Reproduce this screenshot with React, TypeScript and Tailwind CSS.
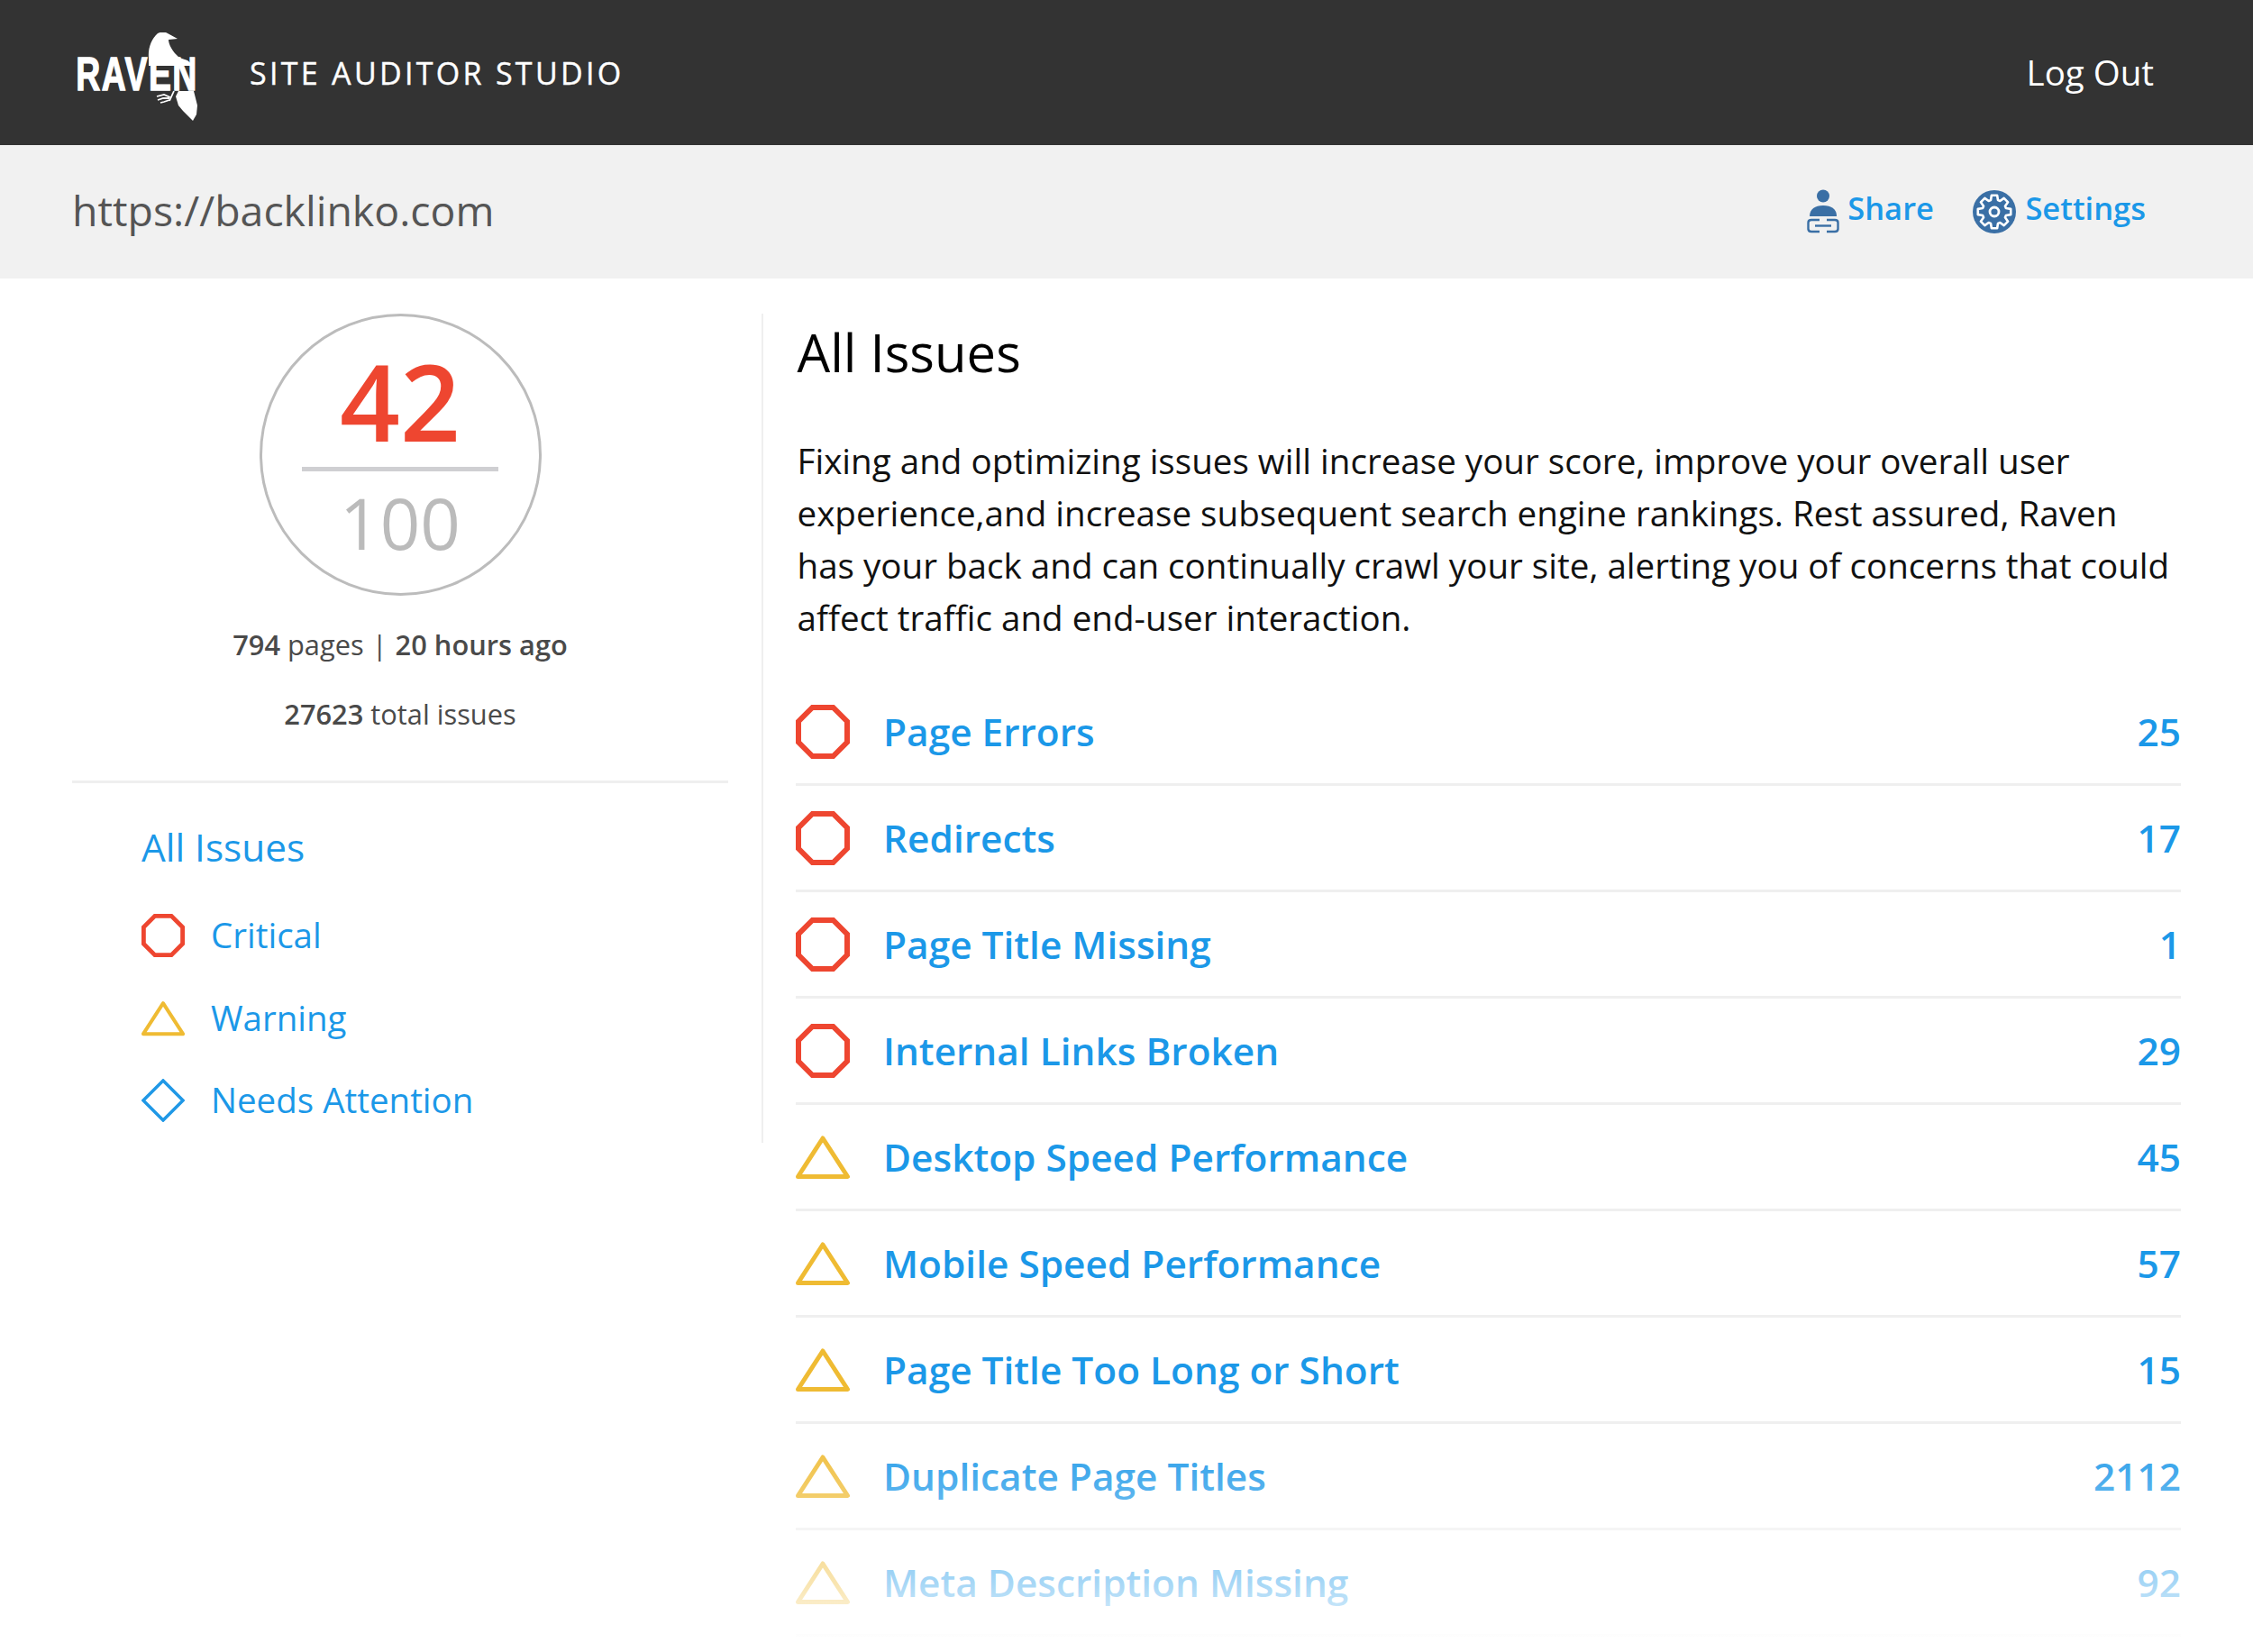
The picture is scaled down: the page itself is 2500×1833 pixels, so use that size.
import React from "react";

const FONT = "font-['Open_Sans',sans-serif]";

function Octagon({ className }: { className: string }) {
  return (
    <svg viewBox="0 0 60 60" className={className} fill="none" stroke="#ee4630" strokeWidth="6">
      <polygon points="18.5,3 41.5,3 57,18.5 57,41.5 41.5,57 18.5,57 3,41.5 3,18.5" />
    </svg>
  );
}

function Triangle({ className }: { className: string }) {
  return (
    <svg viewBox="0 0 60 48" className={className} fill="none" stroke="#efbb33" strokeWidth="5" strokeLinejoin="round">
      <polygon points="30,3 57.5,45.5 2.5,45.5" />
    </svg>
  );
}

function Diamond({ className }: { className: string }) {
  return (
    <svg viewBox="0 0 48 48" className={className} fill="none" stroke="#1f98e6" strokeWidth="3.5">
      <polygon points="24,2 46,24 24,46 2,24" />
    </svg>
  );
}

function Logo() {
  return (
    <div className="relative w-[140px] h-[100px] mt-[11px]">
      <svg viewBox="0 0 140 100" className="absolute inset-0 w-full h-full" fill="#fff">
        {/* head and shoulders */}
        <path d="M80 28 C79 18 83 7 90 1 C94 -1 98 -1 101 1 L112 7 L102 8 C102 13 106 21 114 28 L123 31 L130 37 L80 37 Z" />
        {/* tail */}
        <path d="M113 65 L130 65 L134 81 L133 91 L129 98 L118 87 L113 81 L110 71 Z" />
        {/* foot */}
        <g fill="none" stroke="#fff" strokeWidth="1.8">
          <path d="M108 65 L103 76" />
          <path d="M104 72 L97 69 L89 71" />
          <path d="M103 73 L96 73 L90 75" />
          <path d="M103 75 L97 77 L93 78" />
        </g>
      </svg>
      <div className="absolute left-[1px] top-[28px] w-[133px] flex justify-center">
        <span className="whitespace-nowrap font-['Liberation_Sans',sans-serif] font-bold text-white text-[52px] leading-[37px] tracking-[2px] scale-x-[0.72] [-webkit-text-stroke:1.4px_#fff]">
          RAVEN
        </span>
      </div>
    </div>
  );
}

function ShareIcon() {
  return (
    <svg viewBox="0 0 36 50" className="w-[36px] h-[50px]" fill="#3a6fa5">
      <circle cx="18" cy="7.5" r="7" />
      <path d="M3 30 C3 22 9 18 18 18 C27 18 33 22 33 30 Z" />
      <g fill="none" stroke="#3a6fa5" strokeWidth="2.4">
        <path d="M14 34 H5 C2.5 34 1.5 35 1.5 37 V44 C1.5 46 2.5 47 5 47 H14" />
        <path d="M22 34 H31 C33.5 34 34.5 35 34.5 37 V44 C34.5 46 33.5 47 31 47 H22" />
        <path d="M9 40.5 H27" />
      </g>
    </svg>
  );
}

// 8 toothed gear outline around (24,24)
function gearPath() {
  const pts: string[] = [];
  for (let i = 0; i < 8; i++) {
    const a = (i * Math.PI) / 4;
    const offs: [number, number][] = [
      [-0.3, 13.5],
      [-0.17, 18.5],
      [0.17, 18.5],
      [0.3, 13.5],
    ];
    for (const [d, r] of offs) {
      pts.push(`${(24 + r * Math.sin(a + d)).toFixed(2)},${(24 - r * Math.cos(a + d)).toFixed(2)}`);
    }
  }
  return pts.join(" ");
}

function SettingsIcon() {
  return (
    <svg viewBox="0 0 48 48" className="w-[48px] h-[48px]">
      <circle cx="24" cy="24" r="24" fill="#3a6fa5" />
      <polygon points={gearPath()} fill="none" stroke="#fff" strokeWidth="2.6" strokeLinejoin="round" />
      <circle cx="24" cy="24" r="5" fill="none" stroke="#fff" strokeWidth="2.8" />
    </svg>
  );
}

const issues = [
  { name: "Page Errors", count: "25", type: "critical" },
  { name: "Redirects", count: "17", type: "critical" },
  { name: "Page Title Missing", count: "1", type: "critical" },
  { name: "Internal Links Broken", count: "29", type: "critical" },
  { name: "Desktop Speed Performance", count: "45", type: "warning" },
  { name: "Mobile Speed Performance", count: "57", type: "warning" },
  { name: "Page Title Too Long or Short", count: "15", type: "warning" },
  { name: "Duplicate Page Titles", count: "2112", type: "warning" },
  { name: "Meta Description Missing", count: "92", type: "warning" },
];

export default function App() {
  return (
    <div className={`${FONT} relative w-[2500px] h-[1833px] overflow-hidden bg-white`}>
      <header className="h-[161px] bg-[#333333] flex items-center justify-between pl-[85px] pr-[110px]">
        <div className="flex items-center gap-[52px]">
          <Logo />
          <span className="text-white text-[34px] tracking-[3.3px] mt-[2px] [-webkit-text-stroke:0.4px_#fff]">SITE AUDITOR STUDIO</span>
        </div>
        <span className="text-white text-[38.5px]">Log Out</span>
      </header>

      <div className="h-[148px] bg-[#f1f1f1] flex items-center justify-between pl-[80px] pr-[119px]">
        <span className="text-[#555555] text-[46.4px] mb-[2px]">https://backlinko.com</span>
        <div className="flex items-center gap-[43.5px] text-[#1b98e8] text-[34.5px] font-semibold">
          <div className="flex items-center gap-[9px]">
            <ShareIcon />
            <span className="mb-[9px]">Share</span>
          </div>
          <div className="flex items-center gap-[10px]">
            <SettingsIcon />
            <span className="mb-[9px]">Settings</span>
          </div>
        </div>
      </div>

      <div className="flex pt-[39px]">
        <aside className="w-[767px] ml-[80px] shrink-0 h-[920px] border-r-2 border-[#efefef]">
          <div className="w-[728px] flex flex-col items-center">
            <div className="w-[313px] h-[313px] rounded-full border-[3px] border-[#bcbcbc] flex flex-col items-center">
              <div className="text-[#ee4630] text-[117px] leading-[116px] mt-[36px] font-semibold">42</div>
              <div className="w-[218px] h-[5px] bg-[#cfcfd2] mt-[15px]" />
              <div className="text-[#bbbbbb] text-[78px] leading-[80px] mt-[17px]">100</div>
            </div>
            <p className="mt-[32.5px] text-[#4a4a4a] text-[30.8px] leading-[42px]">
              <span className="font-semibold">794</span> pages <span className="mx-[1px]">|</span> <span className="font-semibold">20 hours ago</span>
            </p>
            <p className="mt-[35px] text-[#4a4a4a] text-[30.8px] leading-[42px]">
              <span className="font-semibold">27623</span> total issues
            </p>
          </div>
          <div className="w-[728px] h-[3px] bg-[#efefef] mt-[53.5px]" />
          <div className="pl-[77px] text-[#1b98e8]">
            <div className="text-[42.3px] leading-[60px] mt-[41px]">All Issues</div>
            <div className="flex items-center gap-[29px] text-[38.5px] h-[60px] mt-[38px]">
              <Octagon className="w-[48px] h-[48px]" />
              <span>Critical</span>
            </div>
            <div className="flex items-center gap-[29px] text-[38.5px] h-[60px] mt-[32px]">
              <Triangle className="w-[48px] h-[40px]" />
              <span>Warning</span>
            </div>
            <div className="flex items-center gap-[29px] text-[38.5px] h-[60px] mt-[31px]">
              <Diamond className="w-[48px] h-[48px]" />
              <span>Needs Attention</span>
            </div>
          </div>
        </aside>

        <main className="w-[1573px] pl-[36px]">
          <h1 className="text-black text-[58px] leading-[80px] mt-[3px] ml-[1.5px]">All Issues</h1>
          <p className="text-[#111111] text-[38.6px] leading-[58px] mt-[51px] ml-[1.5px] w-[1535px]">
            Fixing and optimizing issues will increase your score, improve your overall user experience,and increase subsequent search engine rankings. Rest assured, Raven has your back and can continually crawl your site, alerting you of concerns that could affect traffic and end-user interaction.
          </p>
          <ul className="w-[1537px] mt-[40px]">
            {issues.map((it) => (
              <li key={it.name} className="h-[118px] flex items-center border-b-[3px] border-[#efefef] text-[#1b98e8] text-[42.4px] font-semibold">
                <span className="w-[97px] shrink-0">
                  {it.type === "critical" ? <Octagon className="w-[60px] h-[60px]" /> : <Triangle className="w-[60px] h-[48px]" />}
                </span>
                <span className="flex-1 pt-[1px]">{it.name}</span>
                <span className="pt-[1px]">{it.count}</span>
              </li>
            ))}
          </ul>
        </main>
      </div>

      {/* rows fade out toward the bottom of the page */}
      <div className="absolute left-0 right-0 bottom-0 h-[250px] bg-gradient-to-b from-white/0 via-white/62 via-70% to-white" />
    </div>
  );
}
